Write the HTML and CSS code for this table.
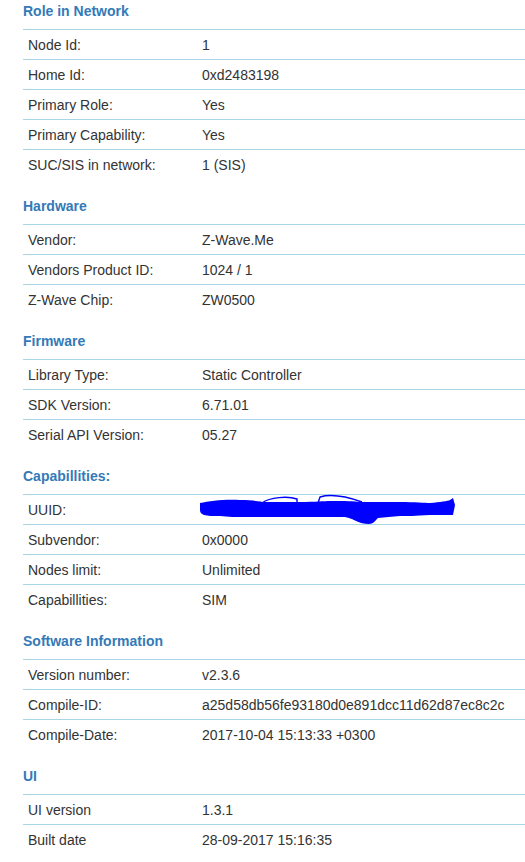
FILE: index.html
```html
<!DOCTYPE html>
<html>
<head>
<meta charset="utf-8">
<link rel="stylesheet" href="styles.css">
</head>
<body>
<div class="page">
  <section class="sec">
    <h3 class="sec-title">Role in Network</h3>
    <div class="tbl">
      <div class="row"><div class="k">Node Id:</div><div class="v">1</div></div>
      <div class="row"><div class="k">Home Id:</div><div class="v">0xd2483198</div></div>
      <div class="row"><div class="k">Primary Role:</div><div class="v">Yes</div></div>
      <div class="row"><div class="k">Primary Capability:</div><div class="v">Yes</div></div>
      <div class="row"><div class="k">SUC/SIS in network:</div><div class="v">1 (SIS)</div></div>
    </div>
  </section>
  <section class="sec">
    <h3 class="sec-title">Hardware</h3>
    <div class="tbl">
      <div class="row"><div class="k">Vendor:</div><div class="v">Z-Wave.Me</div></div>
      <div class="row"><div class="k">Vendors Product ID:</div><div class="v">1024 / 1</div></div>
      <div class="row"><div class="k">Z-Wave Chip:</div><div class="v">ZW0500</div></div>
    </div>
  </section>
  <section class="sec">
    <h3 class="sec-title">Firmware</h3>
    <div class="tbl">
      <div class="row"><div class="k">Library Type:</div><div class="v">Static Controller</div></div>
      <div class="row"><div class="k">SDK Version:</div><div class="v">6.71.01</div></div>
      <div class="row"><div class="k">Serial API Version:</div><div class="v">05.27</div></div>
    </div>
  </section>
  <section class="sec">
    <h3 class="sec-title">Capabillities:</h3>
    <div class="tbl">
      <div class="row"><div class="k">UUID:</div><div class="v v-scribble">
        <svg class="scribble" width="256" height="29" viewBox="0 0 256 29">
          <path fill="#0000ff" d="M0,8 C10,6 25,4 40,5 C55,5 60,7 65,7 C80,7 90,7 100,7 C115,7 125,6 130,6 C145,6 155,6 160,7 C180,7 195,7 200,7 C215,7 225,8 230,8 C240,7 248,6 250,5 L253,3 L255,10 L253,20 C245,20 238,20 230,20 C215,21 207,21 200,21 C192,22 185,22 178,23 C175,26 173,29 169,29 C164,29 160,28 156,26 C152,24 150,23 145,22 C130,22 115,22 100,22 C80,22 65,22 50,22 C35,22 28,22 20,21 C12,21 8,21 4,20 C1,19 0,17 0,15 Z"/>
          <path fill="none" stroke="#0000ff" stroke-width="1.4" d="M62,8 C70,2 88,1 97,4 L97,8"/>
          <path fill="none" stroke="#0000ff" stroke-width="1.4" d="M118,8 L120,2 C130,-1 145,1 162,7"/>
        </svg>
      </div></div>
      <div class="row"><div class="k">Subvendor:</div><div class="v">0x0000</div></div>
      <div class="row"><div class="k">Nodes limit:</div><div class="v">Unlimited</div></div>
      <div class="row"><div class="k">Capabillities:</div><div class="v">SIM</div></div>
    </div>
  </section>
  <section class="sec">
    <h3 class="sec-title">Software Information</h3>
    <div class="tbl">
      <div class="row"><div class="k">Version number:</div><div class="v">v2.3.6</div></div>
      <div class="row"><div class="k">Compile-ID:</div><div class="v">a25d58db56fe93180d0e891dcc11d62d87ec8c2c</div></div>
      <div class="row"><div class="k">Compile-Date:</div><div class="v">2017-10-04 15:13:33 +0300</div></div>
    </div>
  </section>
  <section class="sec">
    <h3 class="sec-title">UI</h3>
    <div class="tbl">
      <div class="row"><div class="k">UI version</div><div class="v">1.3.1</div></div>
      <div class="row"><div class="k">Built date</div><div class="v">28-09-2017 15:16:35</div></div>
    </div>
  </section>
</div>
</body>
</html>
```

FILE: styles.css
```css
html, body {
  margin: 0;
  padding: 0;
  background: #ffffff;
}
body {
  font-family: "Liberation Sans", Arial, sans-serif;
  font-size: 14px;
  color: #333333;
}
.page {
  padding-left: 23px;
}
.sec {
  margin-top: 16px;
}
.sec:first-child {
  margin-top: 0;
}
.sec-title {
  margin: 0 0 7px 0;
  font-size: 14px;
  line-height: 22px;
  font-weight: bold;
  color: #337ab7;
}
.tbl {
  display: flex;
  flex-direction: column;
}
.row {
  display: grid;
  grid-template-columns: 179px 1fr;
  height: 29px;
  border-top: 1px solid #a9d6e6;
  align-items: center;
}
.k {
  padding-left: 5px;
  white-space: nowrap;
}
.v {
  white-space: nowrap;
}
.v-scribble {
  display: flex;
  align-items: center;
  height: 29px;
}
.scribble {
  display: block;
  margin-left: -2px;
  overflow: visible;
}
```
